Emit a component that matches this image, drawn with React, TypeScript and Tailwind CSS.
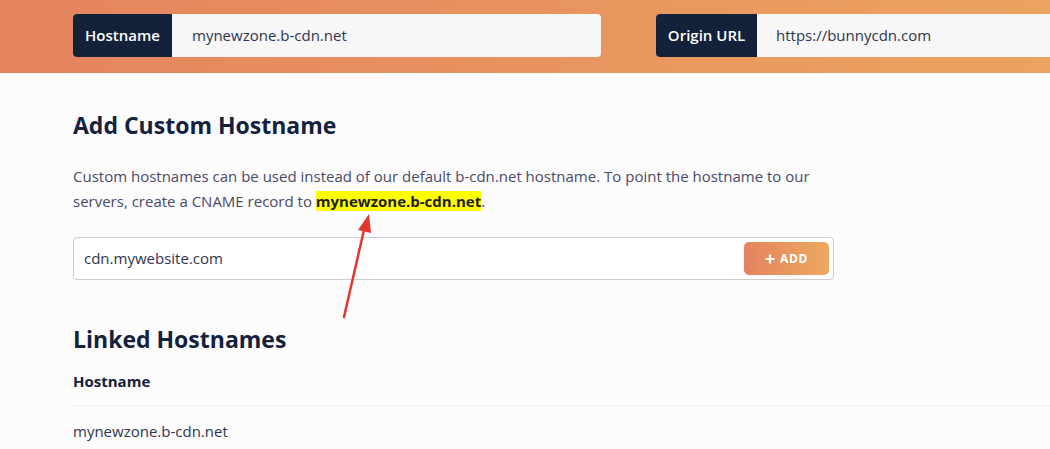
export default function App() {
  return (
    <div
      className="relative min-h-[449px] w-[1050px] overflow-hidden bg-[#fcfcfc]"
      style={{ fontFamily: '"Open Sans", "Noto Sans", sans-serif' }}
    >
      <header className="h-[73px] bg-gradient-to-r from-[#e5835f] to-[#eba35f] pl-[73px] pt-[14px]">
        <div className="flex gap-[55px]">
          <div className="flex h-[43px] w-[528px] shrink-0 overflow-hidden rounded-[4px] bg-[#f7f7f7]">
            <div className="flex w-[99px] items-center justify-center bg-[#13213a] text-[15px] font-semibold text-white">
              Hostname
            </div>
            <div className="flex items-center pl-[20px] text-[15px] text-[#2f3550]">mynewzone.b-cdn.net</div>
          </div>
          <div className="flex h-[43px] w-[528px] shrink-0 overflow-hidden rounded-[4px] bg-[#f7f7f7]">
            <div className="flex w-[101px] items-center justify-center bg-[#13213a] text-[15px] font-semibold text-white">
              Origin URL
            </div>
            <div className="flex items-center pl-[19px] text-[15px] text-[#2f3550]">https://bunnycdn.com</div>
          </div>
        </div>
      </header>

      <main className="pl-[73px]">
        <h1 className="mt-[36px] text-[23px] font-bold leading-[33px] text-[#14213d]">Add Custom Hostname</h1>
        <p className="mt-[22px] w-[770px] text-[15px] leading-[25px] text-[#4a4a68]">
          Custom hostnames can be used instead of our default b-cdn.net hostname. To point the hostname to our servers,
          create a CNAME record to{" "}
          <span className="bg-[#ffff00] font-bold text-[#1e1e24]">mynewzone.b-cdn.net</span>.
        </p>

        <div className="mt-[23px] flex h-[43px] w-[761px] items-center justify-between rounded-[4px] border border-[#cccccc] bg-white pl-[10px] pr-[4px]">
          <span className="text-[15px] text-[#2f3550]">cdn.mywebsite.com</span>
          <button className="flex h-[33px] w-[85px] items-center justify-center gap-[5px] rounded-[5px] bg-gradient-to-r from-[#e5835f] to-[#ebaa60] text-[12px] font-bold tracking-wider text-white">
            <svg width="10" height="10" viewBox="0 0 10 10">
              <path d="M5 0.5v9M0.5 5h9" stroke="white" strokeWidth="2.2" />
            </svg>
            ADD
          </button>
        </div>

        <h2 className="mt-[43px] text-[23px] font-bold leading-[33px] text-[#14213d]">Linked Hostnames</h2>
        <div className="mt-[15px] border-b border-[#f0f0f0] pb-[14px] text-[15px] font-bold leading-[20px] text-[#14213d]">
          Hostname
        </div>
        <div className="pt-[15px] text-[15px] leading-[20px] text-[#2f3550]">mynewzone.b-cdn.net</div>
      </main>

      <svg className="pointer-events-none absolute left-0 top-0" width="1050" height="449">
        <line x1="344" y1="317" x2="364" y2="230" stroke="#e0382c" strokeWidth="2.5" strokeLinecap="round" />
        <polygon points="369,214 371,233 358,230" fill="#e0382c" />
      </svg>
    </div>
  );
}
